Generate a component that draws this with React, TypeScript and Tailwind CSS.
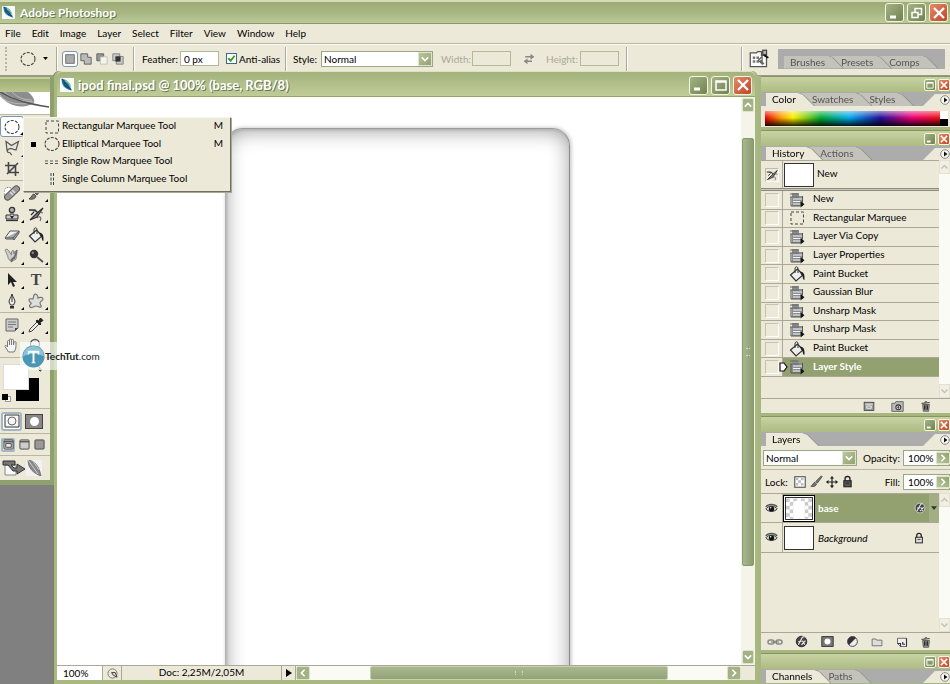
import { useState } from 'react'
import type { ReactNode } from 'react'
import clsx from 'clsx'

type IconName =
  | 'ellipse'
  | 'rect'
  | 'row'
  | 'column'
  | 'move'
  | 'lasso'
  | 'wand'
  | 'crop'
  | 'slice'
  | 'heal'
  | 'brush'
  | 'stamp'
  | 'historyBrush'
  | 'eraser'
  | 'bucket'
  | 'smudge'
  | 'dodge'
  | 'arrow'
  | 'type'
  | 'pen'
  | 'shape'
  | 'note'
  | 'dropper'
  | 'hand'
  | 'zoom'
  | 'command'
  | 'trash'
  | 'camera'
  | 'newDoc'
  | 'link'
  | 'fx'
  | 'mask'
  | 'adjust'
  | 'folder'
  | 'page'
  | 'eye'
  | 'lock'
  | 'checker'
  | 'swap'
  | 'feather'
  | 'fileBrowser'

const iconShapes: Record<IconName, ReactNode> = {
  ellipse: <ellipse cx="8" cy="8" rx="7" ry="6.500" fill="none" stroke="#444" strokeWidth="1.1" strokeDasharray="3 1.3" />,
  rect: <rect x="2" y="2" width="12.500" height="12" fill="none" stroke="#444" strokeDasharray="3 2" />,
  row: <path d="M1 7h14M1 9.500h14" fill="none" stroke="#555" strokeDasharray="3 2" />,
  column: <path d="M7 2v13M9.5 2v13" fill="none" stroke="#444" strokeDasharray="3 1.5" />,
  move: <path d="M8 1l2.4 3H8.7v3.3H12V5.6L15 8l-3 2.4V8.7H8.7V12h1.7L8 15l-2.4-3h1.7V8.7H4v1.7L1 8l3-2.4v1.7h3.3V4H5.6z" fill="#222" />,
  lasso: (
    <path d="M2 1.500l5.500 4 7-4-2.500 8.500-5.500-1.500L3 10zM4.500 9.500c-2 1-1.500 3 .5 3s1 1.500 3 2.500" fill="#e8e6da" stroke="#555" strokeWidth="1.2" />
  ),
  wand: <path d="M2 14l8-8M11 1v3M14 5h-3M13 2l-2 2" stroke="#333" strokeWidth="1.3" />,
  crop: <path d="M4.5 1v10.5H15M1 4.5h10.5V15M3 13L14 2" fill="none" stroke="#444" strokeWidth="1.6" />,
  slice: <path d="M2 14L13 2l1 5-8 7z" fill="#ccc" stroke="#333" />,
  heal: (
    <>
      <path d="M7 3C3 1 0 4 0 7s1 5 3 6" fill="#fff" stroke="#777" strokeDasharray="1.5 1.2" />
      <rect x="-1" y="5" width="18" height="6" rx="3" transform="rotate(-43 8 8)" fill="#999" stroke="#555" />
      <path d="M6 7l3 3M8 5l3 3" stroke="#ddd" strokeWidth="1.5" />
    </>
  ),
  brush: <path d="M14 1L7 8l2 2 6-8zM6 9c-2 0-2 3-5 5 4 1 7-1 7-3z" fill="#777" stroke="#333" strokeWidth=".8" />,
  stamp: (
    <>
      <circle cx="8" cy="4" r="2.700" fill="#aaa" stroke="#333" strokeWidth="1.2" />
      <path d="M7 6.500h2V9h5v4H2V9h5z" fill="#ccc" stroke="#333" />
      <path d="M6 10h4l-2 3z" fill="#222" />
      <path d="M2 14.500h12" stroke="#333" strokeWidth="1.300" />
    </>
  ),
  historyBrush: (
    <>
      <path d="M1 4h6l3 3M3 9l3-3M2 14l5-5 8-7-6 9z" fill="#888" stroke="#333" strokeWidth="1.3" />
      <path d="M9 12c3-3 5 0 3 3M11 6l4 1" fill="none" stroke="#666" strokeWidth="1.2" />
    </>
  ),
  eraser: (
    <>
      <path d="M1 11l5-7h9l-5 8H2z" fill="#f3f3f3" stroke="#555" />
      <path d="M1 11h8l6-7M9 11l1 2 5-7V4" fill="#aaa" stroke="#555" />
    </>
  ),
  bucket: (
    <>
      <path d="M1.500 9l7-6 5.500 6-7 6z" fill="#eee" stroke="#333" strokeWidth="1.2" />
      <path d="M6 7V3c0-3 3-3 3 0v4" fill="none" stroke="#333" />
      <path d="M11 5.500c4 0 5 4 4.400 8.500-2 0-1-4-3-5z" fill="#222" />
    </>
  ),
  smudge: (
    <>
      <path d="M1 2c2 5 3 6 3 8 1 3 5 4 8 1l1-7-2-1-1 3-1-4-1.500 2v3L5 3 3 1z" fill="#ccc" stroke="#888" />
      <path d="M10 9l-3 5M13 2l-3 9M7 12l4-3" stroke="#666" strokeWidth="1.6" />
    </>
  ),
  dodge: (
    <>
      <circle cx="6" cy="6" r="4.2" fill="#333" />
      <circle cx="4.8" cy="4.8" r="1.2" fill="#888" />
      <path d="M9 9l6 5" stroke="#555" strokeWidth="1.8" />
    </>
  ),
  arrow: <path d="M4 1v12l3-3 2 5 2-1-2-4h4z" fill="#222" />,
  type: (
    <text x="8" y="13" textAnchor="middle" fontFamily="Liberation Serif, serif" fontSize="16" fontWeight="700" fill="#444">
      T
    </text>
  ),
  pen: (
    <>
      <path d="M8 1c-1 4-3 5-3 8l1.5 3h3L11 9c0-3-2-4-3-8z" fill="#eee" stroke="#333" />
      <path d="M8 2v7" stroke="#333" />
      <path d="M6 13h4v2.5H6z" fill="#333" />
    </>
  ),
  shape: <path d="M6 2c2-2 4 0 4 3 2-1 5-1 5 1s-3 2-3 4 2 3 1 4-3-1-5-1-4 3-6 1 2-3 1-4-2-1-2-3 3-1 4-1z" fill="#ddd" stroke="#777" strokeWidth="1.200" />,
  note: (
    <>
      <path d="M2 2h12v9l-3 3H2z" fill="#ccc" stroke="#666" />
      <path d="M4 5h8M4 7.5h8M4 10h5" stroke="#777" />
      <path d="M14 11h-3v3z" fill="#444" />
    </>
  ),
  dropper: (
    <>
      <path d="M9 5L2 12l-1 3 3-1 7-7" fill="#eee" stroke="#444" />
      <path d="M8 4l1-1 1.500 1 2-3 2.500 2.500-3 2L13 7l-1 1z" fill="#222" stroke="#222" />
    </>
  ),
  hand: (
    <path
      d="M4.500 14L1 8.500c0-1.500 1.500-1.500 2.500.5V3.500c0-1.500 2-1.500 2 0V7 2c0-1.500 2-1.500 2 0v5-4.500c0-1.500 2-1.500 2 0V7l.5-2.500c.5-1.500 2-1 2 0 0 5 0 7-2 9.500z"
      fill="#f4f4f4"
      stroke="#777"
    />
  ),
  zoom: (
    <>
      <circle cx="7" cy="6" r="4.500" fill="#eee" stroke="#555" strokeWidth="1.300" />
      <path d="M10 10l4 5" stroke="#555" strokeWidth="2" />
    </>
  ),
  command: (
    <>
      <path d="M3 1h7v3h4v10H3z" fill="#8a8e90" />
      <path d="M1 2h8M1 5h9" stroke="#666" strokeWidth="1.200" />
      <path d="M4 7h9M4 9.500h8M4 12h8" stroke="#f2f2f2" strokeWidth="1.200" />
      <path d="M2 5v9h9M13.500 4v6" fill="none" stroke="#555" />
      <path d="M11.500 9v6.500l4-3.200z" fill="#111" />
    </>
  ),
  trash: (
    <>
      <path d="M3.500 6h9l-1 9h-7z" fill="#999" stroke="#444" />
      <path d="M2 4.500l11-1M6 3l3-1M6 7v6M8 7v6M10 7v6" stroke="#222" strokeWidth="1.200" />
    </>
  ),
  camera: (
    <>
      <path d="M1 4h4l1-2h9v12H1z" fill="#bbb" stroke="#555" />
      <circle cx="9" cy="9" r="3" fill="#eee" stroke="#333" strokeWidth="1.300" />
      <path d="M9 7v4M7.500 9h3" stroke="#333" />
    </>
  ),
  newDoc: (
    <>
      <rect x="1.500" y="3" width="13" height="11" fill="#999" stroke="#333" />
      <path d="M3 5.500h10M5 8h6v3H5z" fill="none" stroke="#eee" strokeWidth="1.300" />
    </>
  ),
  link: (
    <>
      <rect x="1" y="6" width="6" height="4" rx="2" fill="none" stroke="#888" strokeWidth="1.500" />
      <rect x="9" y="6" width="6" height="4" rx="2" fill="none" stroke="#888" strokeWidth="1.500" />
      <path d="M4 8h8" stroke="#777" />
    </>
  ),
  fx: (
    <>
      <circle cx="8" cy="8" r="6.500" fill="#444" stroke="currentColor" strokeWidth=".8" />
      <path d="M4 12l5-9c1-1 2-1 2 0M4 8h4M8 12l5-5M9 7l3 5" fill="none" stroke="#e4e4e4" strokeWidth="1.500" />
    </>
  ),
  mask: (
    <>
      <rect x="1" y="2" width="14" height="12" fill="#777" stroke="#222" />
      <circle cx="8" cy="8" r="3.700" fill="#fff" />
    </>
  ),
  adjust: (
    <>
      <circle cx="8" cy="8" r="6" fill="#eee" stroke="#444" strokeWidth="1.200" />
      <path d="M3.700 12.300A6 6 0 0112.300 3.700z" fill="#333" />
    </>
  ),
  folder: <path d="M1.500 4h5l1 1.500h7V13h-13z" fill="#ddd" stroke="#555" />,
  page: (
    <>
      <path d="M2 3h12v11H6l-4-4z" fill="#eee" stroke="#444" />
      <path d="M6 14v-4H2M14 14V3M9 8v3h3" fill="none" stroke="#333" strokeWidth="1.500" />
    </>
  ),
  eye: (
    <>
      <path d="M1 8.500C4 4 12 4 15 8.500 12 12.500 4 12.500 1 8.500z" fill="#ddd" stroke="#333" strokeWidth="1.200" />
      <circle cx="8" cy="8.500" r="3.300" fill="#111" />
      <path d="M1 6c3-4 11-4 14 0" fill="none" stroke="#555" strokeWidth="1.700" />
      <circle cx="7" cy="7" r=".9" fill="#fff" />
    </>
  ),
  /* body fill comes from the class, so a lock can be dark or light */
  lock: (
    <>
      <path d="M5 7V4.500c0-3.500 6-3.500 6 0V7" fill="none" stroke="#222" strokeWidth="1.700" />
      <rect x="3.500" y="7" width="9" height="7.500" stroke="#222" strokeWidth="1.300" />
      <path d="M6 10h4" stroke="#222" />
    </>
  ),
  checker: (
    <>
      <rect x="2" y="2" width="12" height="12" fill="#fff" stroke="#555" strokeWidth="1.300" />
      <path d="M3 3h3v3H3zM9 3h3v3H9zM6 6h3v3H6zM3 9h3v3H3zM9 9h3v3H9z" fill="#bbb" />
    </>
  ),
  swap: (
    <>
      <path d="M3 5h11M2 11h10" stroke="#888" strokeWidth="2" />
      <path d="M10 1l5 4-5 4zM6 7l-5 4 5 4z" fill="#888" />
    </>
  ),
  feather: (
    <>
      <rect width="16" height="16" rx="1" fill="#f7fafb" />
      <path d="M2 1c6 0 10 5 11 13C6 13 1 8 2 1z" fill="#2f7fb5" />
      <path d="M2 1l11 13M4 5c1 3 4 6 7 7" fill="none" stroke="#123f63" strokeWidth="1.200" />
      <path d="M6 3c4 2 6 5 6 8" fill="none" stroke="#8fd08c" strokeWidth="1.500" />
    </>
  ),
  fileBrowser: (
    <>
      <path d="M1 3h5l1-1h3v3h4v9H1z" fill="#fbfbfb" stroke="#555" />
      <path d="M3 6h2v2H3zM6 6h2v2H6zM3 9h2v2H3zM6 9h2v2H6z" fill="#777" />
      <path d="M7.500 9l3-3v6zM9 9l3 3" fill="none" stroke="#666" />
      <rect x="11" y="1" width="3" height="3.500" fill="#bbb" stroke="#444" />
      <path d="M12 5l3.500 2" stroke="#111" strokeWidth="1.500" />
    </>
  )
}

function Icon({ name, className = 'size-4' }: { name: IconName; className?: string }) {
  return (
    <svg viewBox="0 0 16 16" className={clsx('shrink-0', className)} aria-hidden="true">
      {iconShapes[name]}
    </svg>
  )
}

function CaptionButton({ kind, small }: { kind: 'min' | 'max' | 'restore' | 'close'; small?: boolean }) {
  return (
    <button
      type="button"
      aria-label={kind}
      className={clsx(
        'flex shrink-0 items-center justify-center border border-[#f3f6e4] text-white',
        small ? 'size-3 rounded-xs' : 'size-[19px] rounded-[3px]',
        kind === 'close'
          ? 'bg-linear-to-br from-[#e58a68] to-[#c04320]'
          : 'bg-linear-to-br from-[#a5b385] to-[#71834f]'
      )}
    >
      <svg viewBox="0 0 16 16" className={small ? 'size-[10px]' : 'size-4'} fill="none" stroke="currentColor" strokeWidth="2">
        {kind === 'min' && <path d="M3 12h6" strokeWidth="3" />}
        {kind === 'max' && <path d="M3 4h10v9H3zM3 5h10" strokeWidth="1.500" />}
        {kind === 'restore' && <path d="M3 7.500h6v5H3zM6 7V3.500h6.500v6H9" strokeWidth="1.500" />}
        {kind === 'close' && <path d="M3 3l10 10M13 3L3 13" strokeWidth="2.300" />}
      </svg>
    </button>
  )
}

function Chevron({ className }: { className: string }) {
  return (
    <span
      className={clsx(
        'pointer-events-none flex items-center justify-center border border-[#dfe5cc] bg-linear-to-br from-[#b9c69c] to-[#92a271] text-white',
        className
      )}
    >
      <svg viewBox="0 0 10 10" className="size-2" fill="none" stroke="currentColor" strokeWidth="2">
        <path d="M1 3l4 4 4-4" />
      </svg>
    </span>
  )
}

function Select({ label, options, className }: { label: string; options: string[]; className: string }) {
  return (
    <div className={clsx('relative h-4 border border-[#9aa784] bg-white', className)}>
      <select aria-label={label} className="block h-full w-full appearance-none pl-[2px] outline-none">
        {options.map((option) => (
          <option key={option}>{option}</option>
        ))}
      </select>
      <Chevron className="absolute inset-y-0 right-0 w-[14px]" />
    </div>
  )
}

function Tabs({ tabs, well }: { tabs: string[]; well?: boolean }) {
  return (
    <div className={clsx('flex items-end bg-[#acacac]', well ? 'h-full pl-[6px]' : 'h-[14px] pl-[5px]')}>
      {tabs.map((tab, index) => {
        const active = !well && index === 0
        return (
          <div
            key={tab}
            className={clsx('relative -mr-[12px] drop-shadow-[1px_0_0_#8d8d86]', index === 0 ? 'z-3' : index === 1 ? 'z-2' : 'z-1')}
          >
            <button
              type="button"
              className={clsx(
                'block h-[13px] pr-[18px] leading-[13px] [clip-path:polygon(0_0,calc(100%-16px)_0,calc(100%-11px)_2px,100%_100%,0_100%)]',
                index === 0 ? 'pl-[6px]' : 'pl-[10px]',
                active ? 'bg-[#ece9d8] text-black' : 'bg-[#c3c2bb] text-[#555]'
              )}
            >
              {tab}
            </button>
          </div>
        )
      })}
      {!well && (
        <button
          type="button"
          aria-label="Palette menu"
          className="ml-auto flex h-[12px] w-[27px] items-center justify-end bg-[#ece9d8] [clip-path:polygon(12px_0,100%_0,100%_100%,0_100%)]"
        >
          <svg viewBox="0 0 10 10" className="size-[10px]">
            <circle cx="5" cy="5" r="4.300" fill="#f8f8f3" stroke="#888" />
            <path d="M4 2.500v5L7.500 5z" fill="#111" />
          </svg>
        </button>
      )}
    </div>
  )
}

function Palette({
  tabs,
  collapsed,
  className,
  children
}: {
  tabs: string[]
  collapsed?: boolean
  className?: string
  children?: ReactNode
}) {
  return (
    <section className={clsx('flex flex-col border-b-3 border-l-3 border-b-[#a7b67f] border-l-[#a7b67f] bg-[#ece9d8]', className)}>
      <div className="flex h-4 shrink-0 items-center justify-end gap-[2px] border-t border-[#87945f] bg-linear-to-b from-[#c8d3a3] to-[#adbb83]">
        <CaptionButton kind={collapsed ? 'max' : 'min'} small />
        <CaptionButton kind="close" small />
      </div>
      <Tabs tabs={tabs} />
      {children}
    </section>
  )
}

/* disabled scroll track used by the History and Layers lists */
function PaletteScroll() {
  return (
    <div className="flex w-[11px] shrink-0 flex-col justify-between bg-[#fbfbf6] text-[#c5c3b5]">
      <svg viewBox="0 0 12 14" className="h-[14px] border border-[#e4e1d2] bg-[#f1efe3]" fill="none" stroke="currentColor" strokeWidth="2">
        <path d="M2 9l4-4 4 4" />
      </svg>
      <svg viewBox="0 0 12 14" className="h-[14px] border border-[#e4e1d2] bg-[#f1efe3]" fill="none" stroke="currentColor" strokeWidth="2">
        <path d="M2 5l4 4 4-4" />
      </svg>
    </div>
  )
}

function Tool({ name, label, active, single }: { name: IconName; label: string; active?: boolean; single?: boolean }) {
  return (
    <button
      type="button"
      aria-label={label}
      className={clsx(
        'relative flex h-[21px] w-6 items-center justify-center',
        active && 'rounded-[3px] border border-[#7d93b0] bg-white'
      )}
    >
      <Icon name={name} />
      {!single && <span className="absolute right-0 bottom-px size-[3px] bg-black [clip-path:polygon(100%_0,100%_100%,0_100%)]" />}
    </button>
  )
}

const menus = ['File', 'Edit', 'Image', 'Layer', 'Select', 'Filter', 'View', 'Window', 'Help']

const toolGroups: { name: IconName; label: string; single?: boolean }[][] = [
  [
    { name: 'ellipse', label: 'Elliptical Marquee' },
    { name: 'move', label: 'Move', single: true },
    { name: 'lasso', label: 'Polygonal Lasso' },
    { name: 'wand', label: 'Magic Wand', single: true },
    { name: 'crop', label: 'Crop', single: true },
    { name: 'slice', label: 'Slice' }
  ],
  [
    { name: 'heal', label: 'Healing Brush' },
    { name: 'brush', label: 'Brush' },
    { name: 'stamp', label: 'Clone Stamp' },
    { name: 'historyBrush', label: 'History Brush' },
    { name: 'eraser', label: 'Eraser' },
    { name: 'bucket', label: 'Paint Bucket' },
    { name: 'smudge', label: 'Smudge' },
    { name: 'dodge', label: 'Dodge' }
  ],
  [
    { name: 'arrow', label: 'Path Selection' },
    { name: 'type', label: 'Type' },
    { name: 'pen', label: 'Pen' },
    { name: 'shape', label: 'Custom Shape' }
  ],
  [
    { name: 'note', label: 'Notes' },
    { name: 'dropper', label: 'Eyedropper' },
    { name: 'hand', label: 'Hand', single: true },
    { name: 'zoom', label: 'Zoom', single: true }
  ]
]

const marqueeTools: { name: IconName; label: string; shortcut?: string }[] = [
  { name: 'rect', label: 'Rectangular Marquee Tool', shortcut: 'M' },
  { name: 'ellipse', label: 'Elliptical Marquee Tool', shortcut: 'M' },
  { name: 'row', label: 'Single Row Marquee Tool' },
  { name: 'column', label: 'Single Column Marquee Tool' }
]

const historySteps: { label: string; icon: IconName }[] = [
  { label: 'New', icon: 'command' },
  { label: 'Rectangular Marquee', icon: 'rect' },
  { label: 'Layer Via Copy', icon: 'command' },
  { label: 'Layer Properties', icon: 'command' },
  { label: 'Paint Bucket', icon: 'bucket' },
  { label: 'Gaussian Blur', icon: 'command' },
  { label: 'Unsharp Mask', icon: 'command' },
  { label: 'Unsharp Mask', icon: 'command' },
  { label: 'Paint Bucket', icon: 'bucket' },
  { label: 'Layer Style', icon: 'command' }
]

function OptionsBar() {
  const [antiAlias, setAntiAlias] = useState(true)

  return (
    <div className="flex h-8 shrink-0 items-center border-t border-[#fbfaf4] border-b border-b-[#9b9a8c] pb-[3px] shadow-[0_-1px_0_#b9b7a8]">
      <span className="ml-[5px] h-6 border-l-2 border-dotted border-[#b5b3a3]" />
      <Icon name="ellipse" className="ml-[13px] size-4" />
      <svg viewBox="0 0 8 5" className="ml-[7px] h-[3px] w-[5px]">
        <path d="M0 0h8L4 5z" />
      </svg>
      <Divider className="ml-[8px]" />
      <div className="ml-[4px] flex items-center" role="group" aria-label="Selection mode">
        {['New', 'Add', 'Subtract', 'Intersect'].map((mode, index) => (
          <button
            key={mode}
            type="button"
            aria-label={mode}
            className={clsx(
              'flex size-4 items-center justify-center',
              index === 0 && 'rounded-[3px] border border-[#7d93b0] bg-white'
            )}
          >
            <svg viewBox="0 0 14 14" className="size-3">
              {index === 0 && <rect x="2" y="2" width="10" height="10" fill="#aaa" stroke="#666" />}
              {index === 1 && <path d="M1 1h8v4h4v8H5V9H1z" fill="#bbb" stroke="#555" />}
              {index === 2 && (
                <>
                  <path d="M1 1h8v3H5v5H1z" fill="#999" stroke="#555" />
                  <path d="M5 4.500h8V13H5z" fill="#f5f4ec" stroke="#bbb" />
                </>
              )}
              {index === 3 && (
                <>
                  <path d="M1 1h8v8H1zM5 4h8v9H5z" fill="#ccc" stroke="#777" />
                  <path d="M4 4h6v6H4z" fill="#333" />
                </>
              )}
            </svg>
          </button>
        ))}
      </div>
      <Divider className="ml-[7px]" />
      <label className="ml-[7px] flex items-center">
        <span className="w-[38px]">Feather:</span>
        <input defaultValue="0 px" className="h-[15px] w-[39px] border border-[#b0ba98] bg-white pl-[3px] outline-none" />
      </label>
      <label className="ml-[7px] flex items-center gap-[2px]">
        <span className="relative flex size-[11px]">
          <input
            type="checkbox"
            checked={antiAlias}
            onChange={(event) => setAntiAlias(event.target.checked)}
            className="size-[11px] appearance-none border border-[#3d6a86] bg-white"
          />
          {antiAlias && (
            <svg viewBox="0 0 10 10" className="pointer-events-none absolute inset-px size-[9px]" fill="none" stroke="#2e9b2e" strokeWidth="2">
              <path d="M1.500 4.500L4 7.500 8.500 2" />
            </svg>
          )}
        </span>
        <span className="w-[46px]">Anti-alias</span>
      </label>
      <Divider />
      <span className="ml-[6px] w-[28px]">Style:</span>
      <Select label="Style" options={['Normal', 'Fixed Aspect Ratio', 'Fixed Size']} className="w-[112px]" />
      <label className="ml-[8px] flex items-center text-[#aaa899]">
        <span className="w-[31px]">Width:</span>
        <input disabled className="h-[15px] w-[39px] border border-[#b0ba98]" />
      </label>
      <Icon name="swap" className="ml-[12px] size-3" />
      <label className="ml-[11px] flex items-center text-[#aaa899]">
        <span className="w-[34px]">Height:</span>
        <input disabled className="h-[15px] w-[39px] border border-[#b0ba98]" />
      </label>
      <Divider className="ml-[7px]" />
      <Divider className="ml-auto" />
      <button type="button" aria-label="File browser" className="mx-[6px]">
        <Icon name="fileBrowser" className="size-[20px]" />
      </button>
      <div className="mr-[5px] ml-[3px] h-5 w-[167px]">
        <Tabs tabs={['Brushes', 'Presets', 'Comps']} well />
      </div>
    </div>
  )
}

function Divider({ className }: { className?: string }) {
  return <span className={clsx('h-6 w-[2px] shrink-0 border-l border-[#aca899] bg-white', className)} />
}

function Toolbox() {
  return (
    <aside className="relative z-20 w-[54px] shrink-0 self-start border-t border-r-4 border-b-5 border-[#8f9f6d] bg-[#ece9d8]">
      <div className="h-[15px] border-t-2 border-[#c3cf9d] bg-linear-to-b from-[#9fae76] to-[#b9c68e]" />
      <svg viewBox="0 0 50 22" className="block h-[22px] w-full bg-white">
        <path d="M0 0h28c5 4 7 8 6 11-9 6-25 5-34-8z" fill="#8d8d8d" />
        <path d="M4 0c8 7 17 9 30 10M12 0c6 6 12 8 20 8M0 4c8 8 20 9 32 7" fill="none" stroke="#b9b9b9" />
        <path d="M0 0c15 9 30 12 49 15" fill="none" stroke="#555" strokeWidth="1.500" />
      </svg>
      {toolGroups.map((group, index) => (
        <div key={group[0].label} className="grid grid-cols-[24px_24px] border-t border-[#b9b6a5] py-px">
          {group.map((tool) => (
            <Tool key={tool.label} {...tool} active={index === 0 && tool.name === 'ellipse'} />
          ))}
        </div>
      ))}
      <div className="relative h-[51px] border-t border-[#b9b6a5]">
        <span className="absolute top-[19px] left-[15px] size-[25px] border border-[#ece9d8] bg-black" />
        <span className="absolute top-[6px] left-[3px] size-[26px] border border-[#ddd] bg-white" />
        <span className="absolute top-[38px] left-[5px] size-[6px] border border-[#999] bg-white" />
        <span className="absolute top-[36px] left-[2px] size-[6px] bg-black" />
        <svg viewBox="0 0 10 10" className="absolute top-[6px] left-[33px] size-[9px]" fill="none" stroke="#333">
          <path d="M2 3c4-2 6 0 6 5M6 6l2 2 2-2" />
        </svg>
      </div>
      <div className="flex h-[25px] items-center gap-[3px] border-t border-[#b9b6a5] pl-px">
        <button type="button" aria-label="Standard mode" className="flex h-[19px] w-[21px] items-center justify-center rounded-[3px] border-2 border-[#a3b6c2] bg-white">
          <svg viewBox="0 0 16 14" className="w-4">
            <path d="M1 1h14v12H1z" fill="#f7f7f7" stroke="#333" />
            <circle cx="8" cy="7" r="4" fill="none" stroke="#666" />
          </svg>
        </button>
        <button type="button" aria-label="Quick mask mode" className="flex h-[15px] w-[18px] items-center justify-center border border-[#444] bg-[#888]">
          <span className="size-[9px] rounded-full bg-white" />
        </button>
      </div>
      <div className="flex h-[22px] items-center gap-[4px] border-t border-[#b9b6a5] pl-px">
        {['Standard screen', 'Full screen with menu', 'Full screen'].map((mode, index) => (
          <button
            key={mode}
            type="button"
            aria-label={mode}
            className={clsx(
              'flex items-center justify-center',
              index === 0 ? 'size-[14px] rounded-xs border-2 border-[#a3b6c2]' : 'h-3 w-[11px]'
            )}
          >
            <svg viewBox="0 0 12 12" className="size-[11px] shrink-0">
              <rect x="1" y="1" width="10" height="10" rx="1" fill={index === 2 ? '#999' : '#ccc'} stroke="#444" />
              {index < 2 && <path d="M1 3h10" stroke="#555" strokeWidth="1.500" />}
              {index === 0 && <path d="M3 5h6v4H3z" fill="#eee" stroke="#444" />}
            </svg>
          </button>
        ))}
      </div>
      <button type="button" aria-label="Edit in ImageReady" className="flex h-[25px] w-full items-center border-t border-[#b9b6a5] pl-[2px]">
        <svg viewBox="0 0 24 16" className="h-4 w-6">
          <path d="M3 5h11v10H3z" fill="#f8f8f8" stroke="#888" />
          <path d="M1 1h12v4H9l3 3h3V4l8 5-8 5v-3h-4L6 5H1z" fill="#777" stroke="#333" />
        </svg>
        <svg viewBox="0 0 16 16" className="size-4">
          <rect width="16" height="16" fill="#f2f2f2" />
          <path d="M2 0c7 1 11 6 13 16C7 13 2 8 2 0z" fill="#888" stroke="#777" />
          <path d="M2 0l10 14M7 1l6 9" stroke="#ccc" />
        </svg>
      </button>

      <div role="menu" className="absolute top-[40px] left-[23px] w-[208px] border border-[#f7f6ee] border-r-[#716f64] border-b-[#716f64] bg-[#ece9d8] pb-[3px] shadow-[1px_1px_0_#aca899]">
        <div className="grid h-[70px] grid-rows-4">
          {marqueeTools.map((tool) => (
            <button key={tool.label} type="button" role="menuitem" className="flex items-center pr-[7px] pl-[7px] text-left">
              <span className={clsx('size-[5px]', tool.name === 'ellipse' && 'bg-black')} />
              <Icon name={tool.name} className="mr-[2px] ml-[8px] size-4" />
              <span className="pb-[3px]">{tool.label}</span>
              <span className="ml-auto pb-[3px]">{tool.shortcut}</span>
            </button>
          ))}
        </div>
      </div>

      <div className="absolute top-[265px] left-[20px] flex h-7 w-[84px] items-center bg-white/60 pl-[2px]">
        <svg viewBox="0 0 24 24" className="size-[23px] shrink-0">
          <circle cx="12" cy="12" r="11.500" fill="#4a97b5" />
          <path d="M1 12a11 11 0 0122 0c-7-4-15-4-22 0z" fill="#8cc3d6" />
          <path d="M6 6h12v4h-1l-1-2h-3v10h1v1h-4v-1h1V8H8l-1 2H6z" fill="#fff" />
        </svg>
        <span className="text-[#222]">
          <b>TechTut</b>.com
        </span>
      </div>
    </aside>
  )
}

function ScrollArrow({ label, path, vertical }: { label: string; path: string; vertical?: boolean }) {
  return (
    <button
      type="button"
      aria-label={label}
      className={clsx(
        'flex shrink-0 items-center justify-center rounded-xs border border-[#dde4c8] bg-[#a3b186] text-white',
        vertical ? 'h-[14px] w-full' : 'h-full w-[14px]'
      )}
    >
      <svg viewBox="0 0 10 10" className="size-2" fill="none" stroke="currentColor" strokeWidth="2">
        <path d={path} />
      </svg>
    </button>
  )
}

function DocumentWindow() {
  return (
    <main className="relative z-10 -mt-[5px] flex min-w-0 flex-1 flex-col rounded-t-[6px] border-x-3 border-b-4 border-[#a9b881] bg-[#a9b881] shadow-[-1px_0_0_#75845a]">
      <div className="flex h-[26px] shrink-0 items-center gap-[4px] rounded-t-[5px] border-t border-b border-t-[#dbe4bf] border-b-[#94a26c] bg-linear-to-b from-[#a3b27c] to-[#c0cc98] px-[3px] pt-[2px]">
        <Icon name="feather" className="size-[14px]" />
        <h1 className="flex-1 text-[13px] font-bold text-white [text-shadow:1px_1px_0_#6b7850]">ipod final.psd @ 100% (base, RGB/8)</h1>
        <div className="flex gap-[3px]">
          <CaptionButton kind="min" />
          <CaptionButton kind="max" />
          <CaptionButton kind="close" />
        </div>
      </div>
      <div className="flex min-h-0 flex-1 bg-white">
        <div className="min-w-0 flex-1 overflow-hidden">
          <div className="mt-[31px] ml-[168px] h-full w-[345px] rounded-t-[18px] border border-b-0 border-[#b4b4b4] border-t-[#9c9c9c] border-r-[#8c8c8c] shadow-[inset_0_2px_20px_#a0a0a0,inset_1px_1px_3px_#bbb,1px_0_4px_#bbb]" />
        </div>
        <div className="flex w-[14px] shrink-0 flex-col bg-[#f4f4ea] p-px">
          <ScrollArrow label="Scroll up" path="M1 7l4-4 4 4" vertical />
          <div className="mt-[26px] flex h-[428px] items-center justify-center rounded-xs border border-[#8a996b] bg-linear-to-r from-[#a9b78f] to-[#8c9c70]">
            <span className="h-2 w-1 border-y border-dotted border-[#d5dcc3]" />
          </div>
          <span className="flex-1" />
          <ScrollArrow label="Scroll down" path="M1 3l4 4 4-4" vertical />
        </div>
      </div>
      <div className="flex h-[15px] shrink-0 items-stretch border-t border-[#aca899] bg-[#ece9d8]">
        <input aria-label="Zoom level" defaultValue="100%" className="w-[45px] bg-white pl-[6px] outline-none" />
        <span className="flex w-[20px] items-center justify-center border-x border-[#aca899]">
          <svg viewBox="0 0 12 12" className="size-[11px]" fill="none" stroke="#777">
            <circle cx="6" cy="6" r="5" />
            <path d="M5 5h4l2 5-4-2z" fill="#ddd" stroke="#333" />
          </svg>
        </span>
        <span className="w-[159px] text-center leading-[13px]">Doc: 2,25M/2,05M</span>
        <button type="button" aria-label="Status menu" className="flex w-[15px] items-center justify-center border-x border-[#aca899]">
          <svg viewBox="0 0 6 8" className="h-2 w-[6px]">
            <path d="M0 0v8l6-4z" />
          </svg>
        </button>
        <div className="flex flex-1 bg-[#fbfbf6]">
          <ScrollArrow label="Scroll left" path="M7 1L3 5l4 4" />
          <div className="ml-[60px] flex w-[298px] items-center justify-center rounded-xs border border-[#c5d0ac] bg-linear-to-b from-[#a9b78f] to-[#93a377]">
            <span className="h-1 w-2 border-x border-dotted border-[#d5dcc3]" />
          </div>
          <span className="flex-1" />
          <ScrollArrow label="Scroll right" path="M3 1l4 4-4 4" />
        </div>
        <span className="w-[14px] bg-[#ece9d8]" />
      </div>
    </main>
  )
}

function HistoryPalette() {
  return (
    <Palette tabs={['History', 'Actions']} className="h-[286px] shrink-0">
      <div className="flex min-h-0 flex-1">
        <div className="min-w-0 flex-1">
          <div className="flex h-[28px] items-center border-t border-[#aca899]">
            <span className="flex h-full w-[22px] items-center justify-center border-r border-[#aca899]">
              <span className="flex size-[14px] items-center justify-center border border-t-[#bbb] border-l-[#bbb] border-white">
                <Icon name="historyBrush" className="size-3" />
              </span>
            </span>
            <span className="mx-px h-6 w-[30px] border border-[#333] bg-white" />
            <span className="ml-[2px] pb-[3px]">New</span>
          </div>
          <div className="h-[3px] border-y border-[#8d8b7e] bg-[#c8c6b8]" />
          <ol className="grid h-[186px] grid-rows-10">
            {historySteps.map((step, index) => {
              const current = index === historySteps.length - 1
              return (
                <li key={index} className={clsx('flex items-stretch border-b border-[#aca899]', current && 'bg-[#93a070] font-bold text-white')}>
                  <span className="flex w-[22px] items-center justify-center border-r border-[#aca899] bg-[#ece9d8]">
                    <span className="size-[14px] border border-white border-t-[#c5c2b2] border-l-[#c5c2b2]" />
                  </span>
                  <span className="-ml-[4px] flex w-[10px] items-center">
                    {current && (
                      <svg viewBox="0 0 9 10" className="h-[10px] w-[9px]">
                        <path d="M1 1h4l3 4-3 4H1z" fill="#fff" stroke="#111" strokeWidth="1.200" />
                      </svg>
                    )}
                  </span>
                  <button type="button" className="flex items-center gap-[8px] text-left">
                    <Icon name={step.icon} />
                    <span className="pb-[3px]">{step.label}</span>
                  </button>
                </li>
              )
            })}
          </ol>
        </div>
        <PaletteScroll />
      </div>
      <div className="flex h-[15px] shrink-0 items-center justify-end gap-[16px] border-t border-[#aca899] pr-[18px]">
        <Icon name="newDoc" className="size-3" />
        <Icon name="camera" className="size-[13px]" />
        <Icon name="trash" className="size-3" />
      </div>
    </Palette>
  )
}

function PercentField({ label }: { label: string }) {
  return (
    <label className="ml-auto flex items-center gap-[3px]">
      {label}
      <span className="flex h-4 border border-[#9aa784]">
        <input defaultValue="100%" className="w-[33px] bg-white pl-[4px] outline-none" />
        <Chevron className="w-3 -rotate-90" />
      </span>
    </label>
  )
}

function LayersPalette() {
  return (
    <Palette tabs={['Layers']} className="h-[237px] shrink-0">
      <div className="flex h-[23px] shrink-0 items-center pl-[2px]">
        <Select label="Blend mode" options={['Normal', 'Multiply', 'Screen']} className="w-[94px]" />
        <PercentField label="Opacity:" />
      </div>
      <div className="flex h-[24px] shrink-0 items-center border-t border-[#bab7a7] pl-[4px]">
        <span className="w-[28px]">Lock:</span>
        <Icon name="checker" className="size-[14px]" />
        <Icon name="brush" className="ml-[3px] size-[13px]" />
        <Icon name="move" className="ml-[2px] size-[14px]" />
        <Icon name="lock" className="ml-[2px] size-[13px] fill-[#555]" />
        <PercentField label="Fill:" />
      </div>
      <div className="flex min-h-0 flex-1">
        <ul className="min-w-0 flex-1">
          <li className="flex h-[30px] items-center border-y border-[#aca899] bg-[#93a070] font-bold text-white">
            <span className="flex h-full w-[22px] items-center justify-center border-r border-[#aca899] bg-[#ece9d8]">
              <Icon name="eye" className="size-[13px]" />
            </span>
            <span className="flex h-[27px] w-[32px] items-center justify-center border border-black bg-white">
              <svg viewBox="0 0 28 22" className="h-[23px] w-[28px] border border-[#333]">
                <defs>
                  <pattern id="layer-checker" width="8" height="8" patternUnits="userSpaceOnUse">
                    <rect width="8" height="8" fill="#fff" />
                    <path d="M0 0h4v4H0zM4 4h4v4H4z" fill="#ccc" />
                  </pattern>
                </defs>
                <rect width="28" height="22" fill="url(#layer-checker)" />
                <rect x="8" y="3" width="12" height="19" rx="2" fill="#fff" />
              </svg>
            </span>
            <span className="ml-[3px] flex-1">base</span>
            <Icon name="fx" className="size-3" />
            <span className="ml-[3px] flex h-full w-[10px] items-center justify-center bg-[#a3ae85]">
              <svg viewBox="0 0 8 5" className="h-[4px] w-[6px]">
                <path d="M0 0h8L4 5z" fill="#333" />
              </svg>
            </span>
          </li>
          <li className="flex h-[30px] items-center border-b border-[#aca899] italic">
            <span className="flex h-full w-[22px] items-center justify-center border-r border-[#aca899]">
              <Icon name="eye" className="size-[13px]" />
            </span>
            <span className="mx-px h-6 w-[30px] border border-[#333] bg-white" />
            <span className="ml-[3px] flex-1">Background</span>
            <Icon name="lock" className="mr-[14px] size-3 fill-[#ddd]" />
          </li>
        </ul>
        <PaletteScroll />
      </div>
      <div className="flex h-[18px] shrink-0 items-center justify-between border-t border-[#aca899] pr-[18px] pl-[6px]">
        <Icon name="link" />
        <Icon name="fx" className="size-[13px]" />
        <Icon name="mask" className="size-[13px]" />
        <Icon name="adjust" className="size-[13px]" />
        <Icon name="folder" className="size-3" />
        <Icon name="page" className="size-3" />
        <Icon name="trash" className="size-3" />
      </div>
    </Palette>
  )
}

export default function App() {
  return (
    <div className="flex h-screen flex-col overflow-hidden bg-[#808080] font-['Lato','Open_Sans',sans-serif] text-[10px] leading-[14px] text-black">
      <header className="shrink-0 bg-[#ece9d8]">
        <div className="flex h-6 items-center gap-[5px] border-t-2 border-b border-t-[#d3ddb4] border-b-[#8c9969] bg-linear-to-b from-[#9dab77] via-[#a8b684] to-[#bcc998] px-[2px]">
          <Icon name="feather" className="size-[13px]" />
          <h2 className="flex-1 text-[12px] font-bold text-white [text-shadow:1px_1px_0_#6b7850]">Adobe Photoshop</h2>
          <div className="flex gap-[3px]">
            <CaptionButton kind="min" />
            <CaptionButton kind="restore" />
            <CaptionButton kind="close" />
          </div>
        </div>
        <nav className="flex h-5 items-center gap-[11px] pb-[3px] pl-[5px]">
          {menus.map((menu) => (
            <button key={menu} type="button">
              {menu}
            </button>
          ))}
        </nav>
        <OptionsBar />
      </header>
      <div className="flex min-h-0 flex-1">
        <Toolbox />
        <DocumentWindow />
        <div className="flex w-[192px] shrink-0 flex-col overflow-hidden">
          <Palette tabs={['Color', 'Swatches', 'Styles']} collapsed className="h-[54px] shrink-0">
            <div className="mt-[5px] mr-[2px] ml-[4px] flex h-[15px] shrink-0">
              <div className="flex-1 bg-[linear-gradient(to_bottom,#fff8,transparent_45%,#000d),linear-gradient(to_right,#e00,#f90_9%,#fe0_16%,#0a3_32%,#0ae_48%,#219_66%,#e07_84%,#e11)]" />
              <div className="w-[8px] bg-linear-to-b from-white from-50% to-black to-50%" />
            </div>
          </Palette>
          <HistoryPalette />
          <LayersPalette />
          <Palette tabs={['Channels', 'Paths']} collapsed className="flex-1" />
        </div>
      </div>
    </div>
  )
}
